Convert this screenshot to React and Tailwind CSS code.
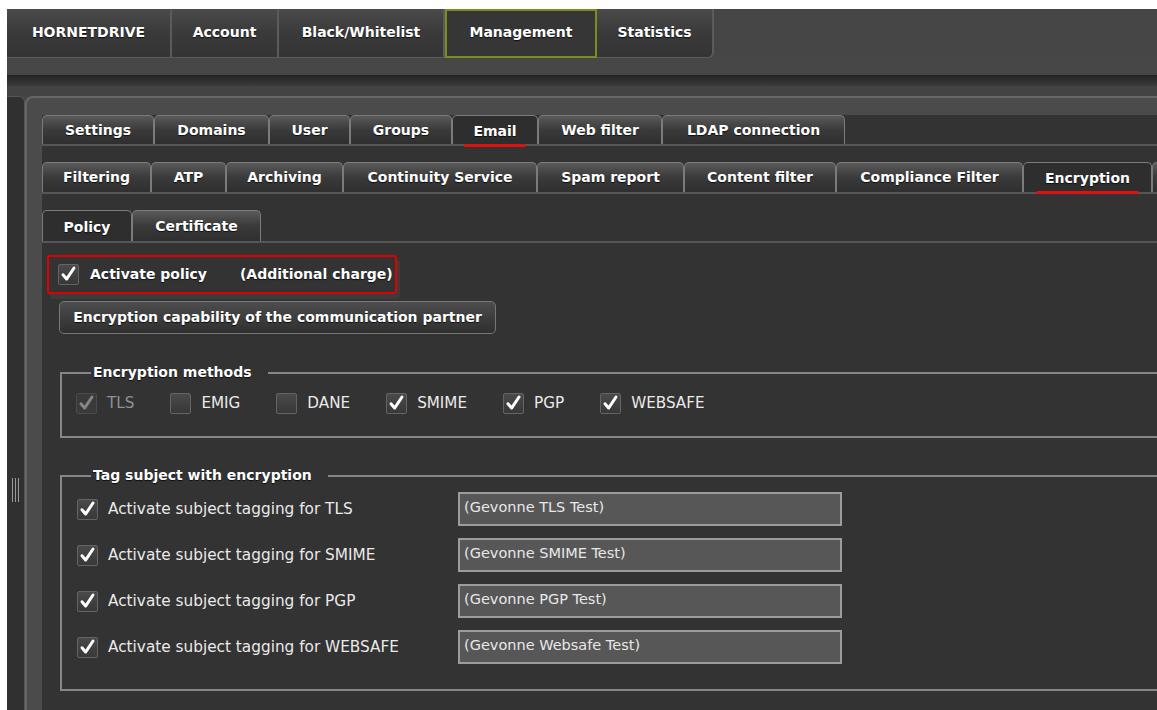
import React from "react";

const NAV = [
  { label: "HORNETDRIVE", w: "w-[165px]" },
  { label: "Account", w: "w-[107px]" },
  { label: "Black/Whitelist", w: "w-[166px]" },
  { label: "Management", w: "w-[152px]", active: true },
  { label: "Statistics", w: "w-[117px]", last: true },
];

const MAIN_TABS = [
  { label: "Settings", w: "w-[112px]" },
  { label: "Domains", w: "w-[115px]" },
  { label: "User", w: "w-[81px]" },
  { label: "Groups", w: "w-[102px]" },
  { label: "Email", w: "w-[86px]", active: true, mark: true },
  { label: "Web filter", w: "w-[124px]" },
  { label: "LDAP connection", w: "w-[183px]" },
];

const EMAIL_TABS = [
  { label: "Filtering", w: "w-[109px]" },
  { label: "ATP", w: "w-[75px]" },
  { label: "Archiving", w: "w-[117px]" },
  { label: "Continuity Service", w: "w-[194px]" },
  { label: "Spam report", w: "w-[147px]" },
  { label: "Content filter", w: "w-[152px]" },
  { label: "Compliance Filter", w: "w-[187px]" },
  { label: "Encryption", w: "w-[129px]", active: true, mark: true },
  { label: "", w: "w-[60px]" },
];

const SUB_TABS = [
  { label: "Policy", w: "w-[90px]", active: true },
  { label: "Certificate", w: "w-[129px]" },
];

const METHODS = [
  { label: "TLS", checked: true, disabled: true },
  { label: "EMIG", checked: false },
  { label: "DANE", checked: false },
  { label: "SMIME", checked: true },
  { label: "PGP", checked: true },
  { label: "WEBSAFE", checked: true },
];

const TAGS = [
  { label: "Activate subject tagging for TLS", value: "(Gevonne TLS Test)" },
  { label: "Activate subject tagging for SMIME", value: "(Gevonne SMIME Test)" },
  { label: "Activate subject tagging for PGP", value: "(Gevonne PGP Test)" },
  { label: "Activate subject tagging for WEBSAFE", value: "(Gevonne Websafe Test)" },
];

const shadow = "[text-shadow:0_1px_1px_rgba(0,0,0,0.75)]";

function CheckBox({ checked = true, disabled = false }) {
  return (
    <span
      className={`flex h-[21px] w-[21px] shrink-0 items-center justify-center rounded-[2px] border ${
        disabled ? "border-[#4b4b4b] bg-[#3a3a3a]" : "border-[#646464] bg-linear-to-b from-[#4a4a4a] to-[#383838]"
      }`}
    >
      {checked && (
        <svg viewBox="0 0 20 20" className="h-[19px] w-[19px]">
          <path
            d="M4.2 10.2 L8 14.8 L15.8 3.2"
            fill="none"
            stroke={disabled ? "#858585" : "#ffffff"}
            strokeWidth="3.1"
            strokeLinecap="round"
            strokeLinejoin="round"
          />
        </svg>
      )}
    </span>
  );
}

function Tab({ label, w, active, mark }) {
  return (
    <div
      className={`flex h-full shrink-0 items-center justify-center rounded-t-[5px] border border-b-0 border-[#7b7b7b] text-[14px] font-bold text-white ${shadow} ${w} ${
        active ? "bg-[#2e2e2e] pt-[2px]" : "bg-linear-to-b from-[#5a5a5a] via-[#3a3a3a] to-[#2f2f2f]"
      }`}
    >
      <span className="relative">
        {label}
        {mark && <span className="absolute -bottom-[5px] -left-[9px] -right-[9px] h-[3px] rounded-full bg-[#e01010]" />}
      </span>
    </div>
  );
}

function TabRow({ tabs, h }) {
  return (
    <div className={`flex items-end border-b-2 border-[#565656] ${h}`}>
      {tabs.map((t, i) => (
        <Tab key={i} {...t} />
      ))}
    </div>
  );
}

export default function App() {
  return (
    <div className="h-[710px] w-[1157px] overflow-hidden bg-white pl-[7px] pt-[9px] font-['DejaVu_Sans',sans-serif]">
      <div className="flex h-[701px] w-[1400px] flex-col bg-[#454545]">
        {/* top navigation */}
        <nav className="flex h-[49px] bg-[#464646]">
          {NAV.map((n) => (
            <div
              key={n.label}
              className={`flex shrink-0 items-center justify-center pb-[2px] text-[14px] font-bold text-white ${shadow} ${n.w} ${
                n.active
                  ? "border-2 border-[#7d8c1c] bg-[#363636]"
                  : "border-b border-r-2 border-[#5b5b5b] bg-linear-to-b from-[#4b4b4b] via-[#3a3a3a] to-[#343434]"
              } ${n.last ? "rounded-br-[6px]" : ""}`}
            >
              {n.label}
            </div>
          ))}
        </nav>
        <div className="h-[17px] bg-[#474747]" />
        <div className="h-[11px] bg-linear-to-b from-[#242424] to-[#3b3b3b]" />
        <div className="h-[10px] bg-[#434343]" />

        <div className="flex flex-1">
          {/* collapsed side panel */}
          <div className="flex w-[18px] shrink-0 flex-col rounded-tr-[6px] border-r border-t border-[#555] bg-[#303030] pt-[381px]">
            <div className="ml-[5px] flex h-[24px] gap-[2px]">
              <span className="w-px bg-[#9a9a9a]" />
              <span className="w-px bg-[#9a9a9a]" />
              <span className="w-px bg-[#9a9a9a]" />
            </div>
          </div>

          {/* main panel */}
          <div className="flex flex-1 flex-col rounded-tl-[8px] border-l-2 border-t-2 border-[#676767] bg-[#4b4b4b] pl-[15px] pt-[17px]">
            <div className="flex flex-1 flex-col bg-[#333333]">
              <TabRow tabs={MAIN_TABS} h="h-[31px]" />
              <div className="mt-[16px]">
                <TabRow tabs={EMAIL_TABS} h="h-[32px]" />
              </div>
              <div className="mt-[16px]">
                <TabRow tabs={SUB_TABS} h="h-[33px]" />
              </div>

              {/* activation */}
              <div className="ml-[5px] mt-[12px] flex h-[39px] w-[350px] items-center rounded-[3px] border-2 border-[#e00000] pl-[9px] shadow-[3px_5px_0_#3c3c3c]">
                <CheckBox />
                <span className={`ml-[11px] text-[14px] font-bold text-white ${shadow}`}>Activate policy</span>
                <span className={`ml-[33px] text-[14px] font-bold text-white ${shadow}`}>(Additional charge)</span>
              </div>

              <button className={`ml-[17px] mt-[7px] h-[33px] w-[437px] rounded-[5px] border border-[#777] bg-linear-to-b from-[#4d4d4d] to-[#2f2f2f] text-[14px] font-bold text-white ${shadow}`}>
                Encryption capability of the communication partner
              </button>

              {/* encryption methods */}
              <fieldset className="ml-[18px] mt-[30px] border-2 border-[#868686] pb-[22px] pl-[14px] pt-[12px]">
                <legend className={`ml-[15px] pl-[2px] pr-[16px] text-[14px] font-bold leading-[17px] text-white ${shadow}`}>
                  Encryption methods
                </legend>
                <div className="flex h-[21px] items-center gap-[36px]">
                  {METHODS.map((m) => (
                    <div key={m.label} className="flex items-center gap-[10px]">
                      <CheckBox checked={m.checked} disabled={m.disabled} />
                      <span className={`text-[15.2px] ${m.disabled ? "text-[#8d9299]" : "text-[#eaeaea]"}`}>{m.label}</span>
                    </div>
                  ))}
                </div>
              </fieldset>

              {/* subject tagging */}
              <fieldset className="ml-[18px] mt-[29px] border-2 border-[#868686] pb-[25px] pl-[15px] pt-[8px]">
                <legend className={`ml-[14px] pl-[2px] pr-[16px] text-[14px] font-bold leading-[17px] text-white ${shadow}`}>
                  Tag subject with encryption
                </legend>
                <div className="flex flex-col gap-[12px]">
                  {TAGS.map((t) => (
                    <div key={t.label} className="flex h-[34px] items-center">
                      <CheckBox />
                      <span className="ml-[10px] w-[350px] text-[15.3px] text-[#eaeaea]">{t.label}</span>
                      <input
                        readOnly
                        value={t.value}
                        className="h-[34px] w-[384px] border-2 border-[#9c9c9c] bg-[#575757] px-[4px] pb-[5px] text-[14.5px] text-[#e8e8e8] outline-none"
                      />
                    </div>
                  ))}
                </div>
              </fieldset>
            </div>
          </div>
        </div>
      </div>
    </div>
  );
}
